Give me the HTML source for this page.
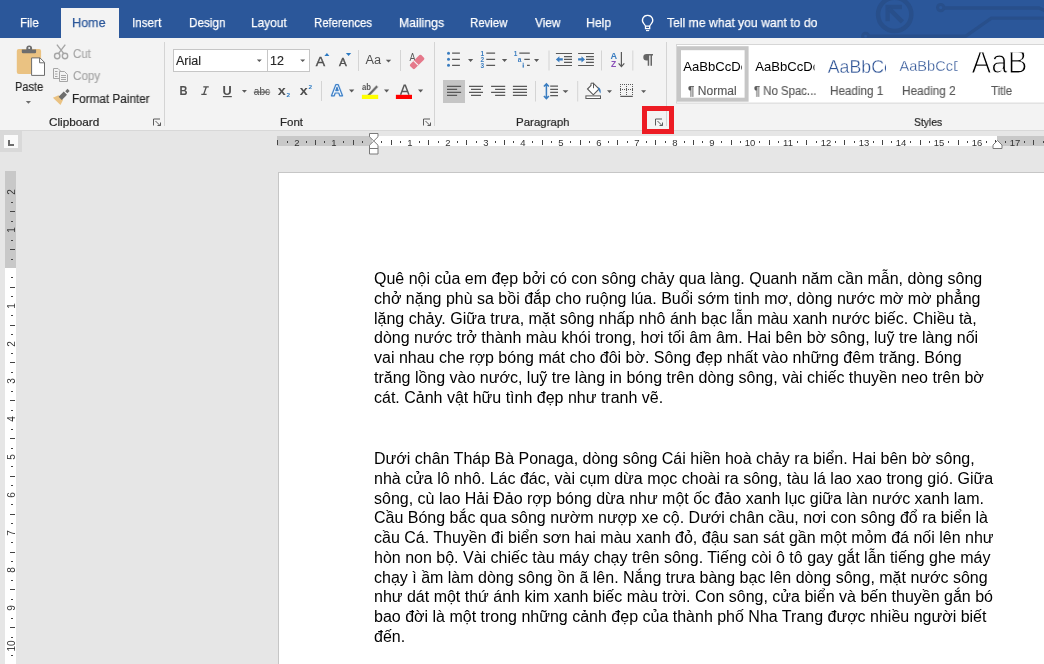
<!DOCTYPE html>
<html><head><meta charset="utf-8">
<style>
*{margin:0;padding:0;box-sizing:border-box}
html,body{width:1044px;height:664px;overflow:hidden;background:#e6e6e6;font-family:"Liberation Sans",sans-serif;position:relative}
div{position:absolute}
svg{position:absolute;overflow:visible;will-change:transform}
.tab,.t12,.gl,.rn,.vn,.tl{will-change:transform}
#tabbar{left:0;top:0;width:1044px;height:38px;background:#2b579a}
.tab{top:13px;font-size:13px;color:#fff;line-height:16px;white-space:nowrap;-webkit-text-stroke:0.25px currentColor}
#hometab{left:61px;top:8px;width:58px;height:30px;background:#f3f3f3}
#ribbon{left:0;top:38px;width:1044px;height:92px;background:#f3f3f3}
#rbborder{left:0;top:130px;width:1044px;height:1px;background:#d8d8d8}
.gl{top:116px;font-size:11.5px;color:#262626;line-height:14px;white-space:nowrap;-webkit-text-stroke:0.2px currentColor}
.sep{width:1px;background:#d4d4d4}
.t12{font-size:12px;line-height:14px;color:#262626;white-space:nowrap;-webkit-text-stroke:0.15px currentColor}
.dis{color:#a6a6a6}
.dd{width:0;height:0;border-left:3px solid transparent;border-right:3px solid transparent;border-top:3px solid #6d6d6d}
/* rulers */
#hr-l{left:277px;top:136px;width:95px;height:10px;background:#c8c8c8}
#hr-w{left:372px;top:136px;width:625px;height:10px;background:#fff}
#hr-r{left:997px;top:136px;width:47px;height:10px;background:#c8c8c8}
.rn{top:137.5px;width:20px;text-align:center;font-size:9.5px;line-height:10px;color:#333}
.rd{top:141px;width:1px;height:2px;background:#444}
.rl{top:140px;width:1px;height:5px;background:#444}
#vr-g{left:5px;top:171px;width:11px;height:97px;background:#c8c8c8}
#vr-w{left:5px;top:268px;width:11px;height:396px;background:#fff}
.vn{left:1.5px;width:20px;height:20px;text-align:center;font-size:10px;line-height:20px;color:#333;transform:rotate(-90deg)}
.vd{left:11px;width:2px;height:1px;background:#444}
.vl{left:10px;width:5px;height:1px;background:#444}
#page{left:278px;top:172px;width:800px;height:600px;background:#fff;border-left:1px solid #c6c6c6;border-top:1px solid #c6c6c6}
.tl{left:373.6px;font-size:16px;line-height:19.8px;color:#000;white-space:nowrap}
.sty{top:6px;height:59px;background:#fff;overflow:hidden}
#f_file{left:19.50px!important;top:14.60px!important;transform:scaleX(0.8950);transform-origin:0 0}
#f_home{left:72.33px!important;top:14.60px!important;transform:scaleX(0.9676);transform-origin:0 0}
#f_insert{left:132.30px!important;top:14.60px!important;transform:scaleX(0.9000);transform-origin:0 0}
#f_design{left:188.70px!important;top:14.60px!important;transform:scaleX(0.9026);transform-origin:0 0}
#f_layout{left:251.49px!important;top:14.60px!important;transform:scaleX(0.9128);transform-origin:0 0}
#f_refs{left:314.43px!important;top:14.60px!important;transform:scaleX(0.8723);transform-origin:0 0}
#f_mail{left:398.66px!important;top:14.60px!important;transform:scaleX(0.9447);transform-origin:0 0}
#f_review{left:470.12px!important;top:14.60px!important;transform:scaleX(0.8762);transform-origin:0 0}
#f_view{left:534.50px!important;top:14.60px!important;transform:scaleX(0.9107);transform-origin:0 0}
#f_help{left:586.26px!important;top:14.60px!important;transform:scaleX(0.9423);transform-origin:0 0}
#f_tell{left:667.40px!important;top:14.60px!important;transform:scaleX(0.9375);transform-origin:0 0}
#f_paste{left:14.92px!important;top:80.10px!important;transform:scaleX(0.8839);transform-origin:0 0}
#f_cut{left:72.50px!important;top:47.00px!important;transform:scaleX(0.9579);transform-origin:0 0}
#f_copy{left:72.50px!important;top:69.40px!important;transform:scaleX(0.9714);transform-origin:0 0}
#f_fp{left:71.52px!important;top:92.20px!important;transform:scaleX(0.9785);transform-origin:0 0}
#f_clip{left:48.50px!important;top:114.80px!important;transform:scaleX(1.0204);transform-origin:0 0}
#f_font{left:279.60px!important;top:114.80px!important;transform:scaleX(0.9957);transform-origin:0 0}
#f_para{left:516.00px!important;top:114.80px!important;transform:scaleX(0.9962);transform-origin:0 0}
#f_styles{left:914.40px!important;top:114.80px!important;transform:scaleX(0.9000);transform-origin:0 0}
#f_sn{left:688.20px!important;top:84.20px!important;transform:scaleX(1.0042);transform-origin:0 0}
#f_sns{left:754.00px!important;top:84.20px!important;transform:scaleX(0.9477);transform-origin:0 0}
#f_sh1{left:829.73px!important;top:84.20px!important;transform:scaleX(0.9741);transform-origin:0 0}
#f_sh2{left:901.62px!important;top:84.20px!important;transform:scaleX(0.9815);transform-origin:0 0}
#f_st{left:990.60px!important;top:84.20px!important;transform:scaleX(0.9545);transform-origin:0 0}

</style></head><body>
<div id="tabbar">
<svg width="1044" height="38" style="left:0;top:0">
 <g fill="none" stroke="#284f8b" stroke-width="3.4">
  <circle cx="894.7" cy="14.4" r="16.6" stroke-width="4.5"/>
  <circle cx="940.7" cy="7.6" r="3.2" stroke-width="3"/>
  <polyline points="944,8 1039,8 1050,13"/>
  <circle cx="865.6" cy="36.3" r="3" stroke-width="3"/>
  <polyline points="868.6,36.3 965.5,36.3 991.4,18.1 1050,18.1"/>
  <polyline points="902,7 887.6,7 887.6,21.2" stroke-width="4.3" stroke-linejoin="miter"/>
  <line x1="888.5" y1="8" x2="902.4" y2="21.8" stroke-width="4.5"/>
 </g>
</svg>
</div>
<div id="hometab"></div>
<div class="tab" id="f_file" style="left:20px">File</div>
<div class="tab" id="f_home" style="left:73px;color:#2b579a">Home</div>
<div class="tab" id="f_insert" style="left:133px">Insert</div>
<div class="tab" id="f_design" style="left:189px">Design</div>
<div class="tab" id="f_layout" style="left:252px">Layout</div>
<div class="tab" id="f_refs" style="left:315px">References</div>
<div class="tab" id="f_mail" style="left:399px">Mailings</div>
<div class="tab" id="f_review" style="left:471px">Review</div>
<div class="tab" id="f_view" style="left:535px">View</div>
<div class="tab" id="f_help" style="left:587px">Help</div>
<svg width="20" height="22" style="left:637px;top:10px">
 <path d="M10.6 5.3a5 5 0 0 0-3.6 8.6c.9 1 1.5 1.9 1.5 2.5v2.3h4.2v-2.3c0-.6.6-1.5 1.5-2.5a5 5 0 0 0-3.6-8.6z M8.5 16.2h4.2" fill="none" stroke="#fff" stroke-width="1.3"/>
 <path d="M9 20.6h3.2" stroke="#fff" stroke-width="1.1"/>
</svg>
<div class="tab" id="f_tell" style="left:667px">Tell me what you want to do</div>

<div id="ribbon"></div>
<svg width="1044" height="131" style="left:0;top:0">
 <!-- ===== Clipboard ===== -->
 <rect x="16.8" y="49" width="24.3" height="24.9" rx="2" fill="#eac282"/>
 <path d="M26.3 49.5v-1.2a2.9 2.9 0 0 1 5.8 0v1.2h4v2.5a1.2 1.2 0 0 1-1.2 1.2H23a1.2 1.2 0 0 1-1.2-1.2v-2.5z" fill="#6d6d6d"/>
 <circle cx="29.2" cy="48.1" r="1" fill="#f3f3f3"/>
 <path d="M31.6 57.9h8.4l4.5 4.5v13H31.6z" fill="#fff" stroke="#6d6d6d" stroke-width="1"/>
 <path d="M39.6 58v4.8h4.8" fill="none" stroke="#6d6d6d" stroke-width="1"/>
 <path d="M25.8 101h5.2l-2.6 2.8z" fill="#6d6d6d"/>
 <!-- scissors -->
 <g fill="none" stroke="#a6a6a6" stroke-width="1.4">
  <circle cx="57.2" cy="56" r="2.7"/><circle cx="65" cy="56" r="2.7"/>
  <path d="M58.4 53.6L65.3 44.6M63.8 53.6L56.9 44.6"/>
 </g>
 <!-- copy -->
 <g fill="#f3f3f3" stroke="#a6a6a6" stroke-width="1">
  <path d="M53.5 68.5h4.5l2.5 2.5v7.5h-7z"/>
  <path d="M59.5 71.5h5l3 3v7h-8z"/>
 </g>
 <g stroke="#a6a6a6" stroke-width="1">
  <path d="M55 71.5h2.5M55 74h2.5M55 76.5h2.5M61 75.5h5M61 77.5h5M61 79.5h5"/>
 </g>
 <!-- format painter -->
 <path d="M52.9 97.8l5.6-2.6 4.6 4.6-2.6 5.3z" fill="#eac282"/>
 <line x1="60.2" y1="98.3" x2="65.4" y2="93.1" stroke="#6d6d6d" stroke-width="4.6"/>
 <line x1="66.3" y1="92.2" x2="68.6" y2="89.9" stroke="#6d6d6d" stroke-width="3"/>
 <!-- launcher -->
 <g fill="none" stroke="#5a5a5a" stroke-width="1">
  <path d="M153.5 125.5v-6.5h6.5"/><path d="M155.5 121l5 5M157.5 125.5h3v-3"/>
 </g>
 <rect x="164" y="42" width="1" height="84" fill="#d4d4d4"/>

 <!-- ===== Font ===== -->
 <rect x="173.5" y="49.5" width="94" height="22" fill="#fff" stroke="#c6c6c6"/>
 <rect x="267.5" y="49.5" width="42" height="22" fill="#fff" stroke="#c6c6c6"/>
 <path d="M256.8 59.4h5l-2.5 2.6z M300.2 59.4h5l-2.5 2.6z" fill="#5a5a5a"/>
 <text x="315.8" y="65.5" font-size="13" fill="#505050" stroke="#505050" stroke-width="0.35" font-family="Liberation Sans" textLength="9.4" lengthAdjust="spacingAndGlyphs">A</text>
 <path d="M324.4 56h5l-2.5-2.9z" fill="#2b79c2"/>
 <text x="338.9" y="65.7" font-size="10.5" fill="#505050" stroke="#505050" stroke-width="0.35" font-family="Liberation Sans" textLength="7.8" lengthAdjust="spacingAndGlyphs">A</text>
 <path d="M345.9 53.1h5.3l-2.65 2.8z" fill="#2b79c2"/>
 <rect x="358" y="50" width="1" height="21" fill="#d4d4d4"/>
 <text x="365.6" y="64.1" font-size="12.5" fill="#505050" font-family="Liberation Sans" textLength="15.6" lengthAdjust="spacingAndGlyphs">Aa</text>
 <path d="M385.8 59.8h5.4l-2.7 2.6z" fill="#5a5a5a"/>
 <rect x="400" y="50" width="1" height="21" fill="#d4d4d4"/>
 <text x="409.5" y="60.8" font-size="10" fill="#5a5a5a" font-family="Liberation Sans" textLength="6" lengthAdjust="spacingAndGlyphs">A</text>
 <rect x="-3.2" y="-4.3" width="6.4" height="15.6" rx="1.3" transform="translate(419.6 59.5) rotate(45)" fill="#e5788a"/>
 <path d="M413.7 60.8l4.4 4.4" stroke="#f3f3f3" stroke-width="1.2"/>
 <!-- row 2 -->
 <text x="179.6" y="95" font-size="12" font-weight="bold" fill="#505050" font-family="Liberation Sans" textLength="8" lengthAdjust="spacingAndGlyphs">B</text>
 <path d="M203.3 86.3h5.5v1.2h-2l-2.2 6.3h2v1.2h-5.3v-1.2h1.9l2.2-6.3h-2.1z" fill="#505050"/>
 <text x="222.6" y="95" font-size="12" font-weight="bold" fill="#505050" font-family="Liberation Sans" textLength="9.2" lengthAdjust="spacingAndGlyphs">U</text>
 <rect x="222.9" y="96" width="8.9" height="1.2" fill="#505050"/>
 <path d="M241.9 90h5l-2.5 2.8z" fill="#5a5a5a"/>
 <text x="253.8" y="95.3" font-size="10" fill="#505050" font-family="Liberation Sans" textLength="16.2" lengthAdjust="spacingAndGlyphs">abc</text>
 <rect x="253.8" y="91.6" width="16.4" height="1" fill="#505050"/>
 <text x="277.7" y="95" font-size="12" font-weight="bold" fill="#505050" font-family="Liberation Sans" textLength="8" lengthAdjust="spacingAndGlyphs">x</text>
 <text x="286.4" y="96.9" font-size="6.2" font-weight="bold" fill="#2b79c2" font-family="Liberation Sans" textLength="3.6" lengthAdjust="spacingAndGlyphs">2</text>
 <text x="299.7" y="95" font-size="12" font-weight="bold" fill="#505050" font-family="Liberation Sans" textLength="8" lengthAdjust="spacingAndGlyphs">x</text>
 <text x="308.4" y="89.3" font-size="6.2" font-weight="bold" fill="#2b79c2" font-family="Liberation Sans" textLength="3.6" lengthAdjust="spacingAndGlyphs">2</text>
 <rect x="321" y="81" width="1" height="20" fill="#d4d4d4"/>
 <path d="M331.5 95.8l4.3-11.1h2.4l4.3 11.1h-2.7l-1-2.8h-3.6l-1 2.8z M335.8 90.6h2.4l-1.2-3.4z" fill="#f2f7fc" stroke="#dce8f6" stroke-width="2.6" stroke-linejoin="round"/>
 <path d="M331.5 95.8l4.3-11.1h2.4l4.3 11.1h-2.7l-1-2.8h-3.6l-1 2.8z M335.8 90.6h2.4l-1.2-3.4z" fill="#f2f7fc" stroke="#3f80c6" stroke-width="1.2" stroke-linejoin="round"/>
 <path d="M349 89.6h5.3l-2.65 3z" fill="#5a5a5a"/>
 <text x="362" y="90.2" font-size="8.6" font-weight="bold" fill="#555" font-family="Liberation Sans" textLength="9" lengthAdjust="spacingAndGlyphs">ab</text>
 <path d="M366.6 95.2l9.8-10.2 2.1 2-9.8 10.2z" fill="#6d6d6d" stroke="#f3f3f3" stroke-width="0.8"/>
 <rect x="361.9" y="94.8" width="16.3" height="4.2" fill="#ffff00"/>
 <path d="M384 89.6h5.2l-2.6 3z" fill="#5a5a5a"/>
 <path d="M400.6 94.8l3.6-9.5h1.1l3.6 9.5M401.9 91.6h5.7" fill="none" stroke="#595959" stroke-width="1.5"/>
 <rect x="395.9" y="94.8" width="16.1" height="4.2" fill="#ff0000"/>
 <path d="M418 89.6h5.2l-2.6 3z" fill="#5a5a5a"/>
 <g fill="none" stroke="#5a5a5a" stroke-width="1">
  <path d="M423.5 125.5v-6.5h6.5"/><path d="M425.5 121l5 5M427.5 125.5h3v-3"/>
 </g>
 <rect x="434" y="42" width="1" height="84" fill="#d4d4d4"/>

 <!-- ===== Paragraph ===== -->
 <g fill="#3a7dc0">
  <circle cx="448.5" cy="53.2" r="1.5"/><circle cx="448.5" cy="59.3" r="1.5"/><circle cx="448.5" cy="65.3" r="1.5"/>
 </g>
 <g stroke="#595959" stroke-width="1.2">
  <path d="M452.1 53.2h7.8M452.1 59.3h7.8M452.1 65.3h7.8"/>
  <path d="M486.3 53.2h8.8M486.3 59.3h8.8M486.3 65.3h8.8"/>
  <path d="M519.3 53.2h10.5M524.3 59.3h5.5M527 65.3h2.8"/>
 </g>
 <g fill="#3a7dc0" font-size="6.5" font-weight="bold" font-family="Liberation Sans">
  <text x="480.6" y="55.6">1</text><text x="480.6" y="61.7">2</text><text x="480.6" y="67.7">3</text>
  <text x="513.8" y="55.6">1</text><text x="517.8" y="61.7">a</text>
 </g>
 <rect x="522.6" y="64.3" width="1.3" height="3.3" fill="#3a7dc0"/><rect x="522.6" y="62.8" width="1.3" height="0.9" fill="#3a7dc0"/>
 <path d="M468h0" />
 <path d="M468 58.9h5.2l-2.6 3z M501.9 58.9h5.3l-2.65 3z M534 58.9h5.1l-2.55 3z" fill="#5a5a5a"/>
 <rect x="548.5" y="50.5" width="1" height="20" fill="#d4d4d4"/>
 <g stroke="#595959" stroke-width="1.2">
  <path d="M555.9 53.5h16.1M564 56.6h8M564 59.4h8M564 62.3h8M555.9 65.5h16.1"/>
  <path d="M578.1 53.5h15.8M586 56.6h7.9M586 59.4h7.9M586 62.3h7.9M578.1 65.5h15.8"/>
 </g>
 <g fill="#3a7dc0">
  <path d="M555.9 59.4l3.5-3.2v2.1h3.4v2.2h-3.4v2.1z"/>
  <path d="M585 59.4l-3.5-3.2v2.1h-3.4v2.2h3.4v2.1z"/>
 </g>
 <rect x="601" y="50.5" width="1" height="20" fill="#d4d4d4"/>
 <text x="610.5" y="58.7" font-size="8.5" font-weight="bold" fill="#3a7dc0" font-family="Liberation Sans" textLength="6.6" lengthAdjust="spacingAndGlyphs">A</text>
 <text x="610.9" y="67" font-size="8.5" font-weight="bold" fill="#8a50b8" font-family="Liberation Sans" textLength="5.2" lengthAdjust="spacingAndGlyphs">Z</text>
 <path d="M621.4 52v14.5M618.6 63.3l2.8 3.3 2.9-3.3" fill="none" stroke="#595959" stroke-width="1.2"/>
 <rect x="632.3" y="50.5" width="1" height="20" fill="#d4d4d4"/>
 <path d="M646.6 54h6.4v1.4h-1v10.4h-1.5V55.4h-1.3v10.4h-1.5v-5.2h-1.1a3.3 3.3 0 0 1 0-6.6z" fill="#666"/>
 <!-- row 2 -->
 <rect x="443" y="80" width="22" height="23" fill="#c5c5c5"/>
 <g stroke="#595959" stroke-width="1.2">
  <path d="M447 86.4h14.1M447 89.4h10.1M447 92.4h14.1M447 95.4h10.1"/>
  <path d="M469 86.4h14M471 89.4h10M469 92.4h14M471 95.4h10"/>
  <path d="M491.1 86.4h14.1M495.1 89.4h10.1M491.1 92.4h14.1M495.1 95.4h10.1"/>
  <path d="M512.9 86.4h14.1M512.9 89.4h14.1M512.9 92.4h14.1M512.9 95.4h14.1"/>
  <path d="M550.2 86.2h7.8M550.2 89.3h7.8M550.2 92.4h7.8M550.2 95.6h7.8"/>
 </g>
 <rect x="535" y="81" width="1" height="20.5" fill="#d4d4d4"/>
 <path d="M546.4 84v14.5M543.9 86.6l2.5-2.7 2.5 2.7M543.9 95.9l2.5 2.7 2.5-2.7" fill="none" stroke="#3a7dc0" stroke-width="1.5"/>
 <path d="M562.6 90.3h5.8l-2.9 2.6z" fill="#5a5a5a"/>
 <rect x="577.2" y="81" width="1" height="20.5" fill="#d4d4d4"/>
 <path d="M587.5 89l5.8-5.8 5.8 5.8-5.8 5.8z" fill="#fff" stroke="#595959" stroke-width="1.1"/>
 <path d="M591 86v-2.8h2.5v5" fill="#fff" stroke="#595959" stroke-width="1"/>
 <path d="M598 87.2c2.2.6 3.4 3.5 2.3 6.2l-1.6-3.2z" fill="#3a7dc0"/>
 <rect x="585.9" y="95.9" width="14.6" height="2.6" fill="#fff" stroke="#595959" stroke-width="1"/>
 <path d="M607 90.3h5l-2.5 2.6z" fill="#5a5a5a"/>
 <g fill="none" stroke="#595959" stroke-width="1" stroke-dasharray="1 1">
  <path d="M620 84.5h13M620 89.5h13M620.5 84v12M626.5 84v12M632.5 84v12"/>
 </g>
 <rect x="620.3" y="95.8" width="12.5" height="1.2" fill="#595959"/>
 <path d="M641.1 90.3h5l-2.5 2.6z" fill="#5a5a5a"/>
 <g fill="none" stroke="#5a5a5a" stroke-width="1">
  <path d="M655.5 125.5v-6.5h6.5"/><path d="M657.5 121l5 5M659.5 125.5h3v-3"/>
 </g>
 <rect x="666" y="42" width="1" height="84" fill="#d4d4d4"/>

 <!-- ===== Styles ===== -->
 <rect x="676.5" y="44.5" width="380" height="58.6" fill="#fff" stroke="#d6d6d6"/>
 <rect x="679" y="48.2" width="67.6" height="51.5" fill="#fff" stroke="#c6c6c6" stroke-width="4"/>
 <defs>
  <clipPath id="c1"><rect x="681" y="50" width="61" height="30"/></clipPath>
  <clipPath id="c2"><rect x="752" y="50" width="62.5" height="30"/></clipPath>
  <clipPath id="c3"><rect x="824" y="50" width="62" height="30"/></clipPath>
  <clipPath id="c4"><rect x="897" y="50" width="60.5" height="30"/></clipPath>
  <clipPath id="c5"><rect x="965" y="52.5" width="75" height="30"/></clipPath>
 </defs>
 <text clip-path="url(#c1)" x="683.3" y="71.1" font-size="13" fill="#000" font-family="Liberation Sans" textLength="64" lengthAdjust="spacingAndGlyphs">AaBbCcDc</text>
 <text clip-path="url(#c2)" x="755.2" y="71.1" font-size="13" fill="#000" font-family="Liberation Sans" textLength="64" lengthAdjust="spacingAndGlyphs">AaBbCcDc</text>
 <text clip-path="url(#c3)" x="827.8" y="72.8" font-size="18.5" fill="#2f5496" stroke="#fff" stroke-width="0.35" font-family="Liberation Sans" textLength="65" lengthAdjust="spacingAndGlyphs">AaBbCc</text>
 <text clip-path="url(#c4)" x="899.5" y="71.3" font-size="15" fill="#2f5496" stroke="#fff" stroke-width="0.3" font-family="Liberation Sans" textLength="64" lengthAdjust="spacingAndGlyphs">AaBbCcD</text>
 <text clip-path="url(#c5)" x="971.6" y="72.8" font-size="34" fill="#000" stroke="#fff" stroke-width="1.2" font-family="Liberation Sans" textLength="56" lengthAdjust="spacingAndGlyphs">AaB</text>
</svg>
<div class="t12" id="f_paste" style="left:15px;top:81px;font-size:12.5px">Paste</div>
<div class="t12 dis" id="f_cut" style="left:72px;top:46px">Cut</div>
<div class="t12 dis" id="f_copy" style="left:72px;top:69px">Copy</div>
<div class="t12" id="f_fp" style="left:72px;top:92px">Format Painter</div>
<div class="gl" id="f_clip" style="left:48px">Clipboard</div>
<div class="t12" style="left:176px;top:54px;font-size:12.5px">Arial</div>
<div class="t12" style="left:270px;top:54px;font-size:12.5px">12</div>
<div class="gl" id="f_font" style="left:280px">Font</div>
<div class="gl" id="f_para" style="left:516px">Paragraph</div>
<div class="t12" id="f_sn" style="left:688px;top:84px;color:#595959;font-size:12px">¶ Normal</div>
<div class="t12" id="f_sns" style="left:754px;top:84px;color:#595959;font-size:12px">¶ No Spac...</div>
<div class="t12" id="f_sh1" style="left:830px;top:84px;color:#595959;font-size:12px">Heading 1</div>
<div class="t12" id="f_sh2" style="left:902px;top:84px;color:#595959;font-size:12px">Heading 2</div>
<div class="t12" id="f_st" style="left:990px;top:84px;color:#595959;font-size:12px">Title</div>
<div class="gl" id="f_styles" style="left:914px">Styles</div>
<div id="rbborder"></div>

<!-- red highlight box -->
<div style="left:642px;top:106px;width:32px;height:28px;border:5px solid #ed1c24"></div>

<!-- tab selector -->
<div style="left:0;top:131px;width:22px;height:21px;background:#d9d9d9"></div>
<div style="left:4px;top:135px;width:14px;height:13px;background:#fafafa"></div>
<div style="left:8px;top:140px;width:2px;height:6px;background:#6d6d6d"></div>
<div style="left:8px;top:144px;width:6px;height:2px;background:#6d6d6d"></div>

<!-- horizontal ruler -->
<div id="hr-l"></div><div id="hr-w"></div><div id="hr-r"></div>
<div class="rn" style="left:286.6px">2</div>
<div class="rd" style="left:306px"></div>
<div class="rl" style="left:315px"></div>
<div class="rd" style="left:324px"></div>
<div class="rn" style="left:324.4px">1</div>
<div class="rd" style="left:343px"></div>
<div class="rl" style="left:353px"></div>
<div class="rd" style="left:362px"></div>
<div class="rd" style="left:381px"></div>
<div class="rl" style="left:391px"></div>
<div class="rd" style="left:400px"></div>
<div class="rn" style="left:400.0px">1</div>
<div class="rd" style="left:419px"></div>
<div class="rl" style="left:428px"></div>
<div class="rd" style="left:438px"></div>
<div class="rn" style="left:437.8px">2</div>
<div class="rd" style="left:457px"></div>
<div class="rl" style="left:466px"></div>
<div class="rd" style="left:476px"></div>
<div class="rn" style="left:475.6px">3</div>
<div class="rd" style="left:495px"></div>
<div class="rl" style="left:504px"></div>
<div class="rd" style="left:513px"></div>
<div class="rn" style="left:513.4px">4</div>
<div class="rd" style="left:532px"></div>
<div class="rl" style="left:542px"></div>
<div class="rd" style="left:551px"></div>
<div class="rn" style="left:551.2px">5</div>
<div class="rd" style="left:570px"></div>
<div class="rl" style="left:580px"></div>
<div class="rd" style="left:589px"></div>
<div class="rn" style="left:589.0px">6</div>
<div class="rd" style="left:608px"></div>
<div class="rl" style="left:617px"></div>
<div class="rd" style="left:627px"></div>
<div class="rn" style="left:626.8px">7</div>
<div class="rd" style="left:646px"></div>
<div class="rl" style="left:655px"></div>
<div class="rd" style="left:665px"></div>
<div class="rn" style="left:664.6px">8</div>
<div class="rd" style="left:684px"></div>
<div class="rl" style="left:693px"></div>
<div class="rd" style="left:702px"></div>
<div class="rn" style="left:702.4px">9</div>
<div class="rd" style="left:721px"></div>
<div class="rl" style="left:731px"></div>
<div class="rd" style="left:740px"></div>
<div class="rn" style="left:740.2px">10</div>
<div class="rd" style="left:759px"></div>
<div class="rl" style="left:769px"></div>
<div class="rd" style="left:778px"></div>
<div class="rn" style="left:778.0px">11</div>
<div class="rd" style="left:797px"></div>
<div class="rl" style="left:806px"></div>
<div class="rd" style="left:816px"></div>
<div class="rn" style="left:815.8px">12</div>
<div class="rd" style="left:835px"></div>
<div class="rl" style="left:844px"></div>
<div class="rd" style="left:854px"></div>
<div class="rn" style="left:853.6px">13</div>
<div class="rd" style="left:873px"></div>
<div class="rl" style="left:882px"></div>
<div class="rd" style="left:891px"></div>
<div class="rn" style="left:891.4px">14</div>
<div class="rd" style="left:910px"></div>
<div class="rl" style="left:920px"></div>
<div class="rd" style="left:929px"></div>
<div class="rn" style="left:929.2px">15</div>
<div class="rd" style="left:948px"></div>
<div class="rl" style="left:958px"></div>
<div class="rd" style="left:967px"></div>
<div class="rn" style="left:967.0px">16</div>
<div class="rd" style="left:986px"></div>
<div class="rl" style="left:995px"></div>
<div class="rd" style="left:1005px"></div>
<div class="rn" style="left:1004.8px">17</div>
<div class="rd" style="left:1024px"></div>
<div class="rl" style="left:1033px"></div>
<div class="rd" style="left:1043px"></div>
<div class="rd" style="left:287px"></div>
<div class="rl" style="left:277px"></div>
<svg width="12" height="24" style="left:368px;top:132px">
 <path d="M1.5 1.5h8.5v3.3L5.75 9 1.5 4.8z" fill="#fff" stroke="#7a7a7a" stroke-width="1"/>
 <path d="M5.75 9L10 13.2v8.8H1.5v-8.8z" fill="#fff" stroke="#7a7a7a" stroke-width="1"/>
 <path d="M1.5 16.5h8.5" stroke="#7a7a7a" stroke-width="1"/>
</svg>
<svg width="12" height="12" style="left:992px;top:139px">
 <path d="M5.5 1.5L10 6v3.5H1V6z" fill="#fff" stroke="#7a7a7a" stroke-width="1"/>
</svg>

<!-- vertical ruler -->
<div id="vr-g"></div><div id="vr-w"></div>
<div class="vn" style="top:182.4px">2</div>
<div class="vd" style="top:202px"></div>
<div class="vl" style="top:211px"></div>
<div class="vd" style="top:221px"></div>
<div class="vn" style="top:220.2px">1</div>
<div class="vd" style="top:240px"></div>
<div class="vl" style="top:249px"></div>
<div class="vd" style="top:259px"></div>
<div class="vd" style="top:277px"></div>
<div class="vl" style="top:287px"></div>
<div class="vd" style="top:296px"></div>
<div class="vn" style="top:295.8px">1</div>
<div class="vd" style="top:315px"></div>
<div class="vl" style="top:325px"></div>
<div class="vd" style="top:334px"></div>
<div class="vn" style="top:333.6px">2</div>
<div class="vd" style="top:353px"></div>
<div class="vl" style="top:362px"></div>
<div class="vd" style="top:372px"></div>
<div class="vn" style="top:371.4px">3</div>
<div class="vd" style="top:391px"></div>
<div class="vl" style="top:400px"></div>
<div class="vd" style="top:410px"></div>
<div class="vn" style="top:409.2px">4</div>
<div class="vd" style="top:429px"></div>
<div class="vl" style="top:438px"></div>
<div class="vd" style="top:448px"></div>
<div class="vn" style="top:447.0px">5</div>
<div class="vd" style="top:466px"></div>
<div class="vl" style="top:476px"></div>
<div class="vd" style="top:485px"></div>
<div class="vn" style="top:484.8px">6</div>
<div class="vd" style="top:504px"></div>
<div class="vl" style="top:514px"></div>
<div class="vd" style="top:523px"></div>
<div class="vn" style="top:522.6px">7</div>
<div class="vd" style="top:542px"></div>
<div class="vl" style="top:552px"></div>
<div class="vd" style="top:561px"></div>
<div class="vn" style="top:560.4px">8</div>
<div class="vd" style="top:580px"></div>
<div class="vl" style="top:589px"></div>
<div class="vd" style="top:599px"></div>
<div class="vn" style="top:598.2px">9</div>
<div class="vd" style="top:618px"></div>
<div class="vl" style="top:627px"></div>
<div class="vd" style="top:637px"></div>
<div class="vn" style="top:636.0px">10</div>
<div class="vd" style="top:655px"></div>

<div id="page"></div>
<div class="tl" style="top:269.00px">Quê nội của em đẹp bởi có con sông chảy qua làng. Quanh năm cần mẫn, dòng sông</div>
<div class="tl" style="top:288.80px">chở nặng phù sa bồi đắp cho ruộng lúa. Buổi sớm tinh mơ, dòng nước mờ mờ phẳng</div>
<div class="tl" style="top:308.60px">lặng chảy. Giữa trưa, mặt sông nhấp nhô ánh bạc lẫn màu xanh nước biếc. Chiều tà,</div>
<div class="tl" style="top:328.40px">dòng nước trở thành màu khói trong, hơi tối âm âm. Hai bên bờ sông, luỹ tre làng nối</div>
<div class="tl" style="top:348.20px">vai nhau che rợp bóng mát cho đôi bờ. Sông đẹp nhất vào những đêm trăng. Bóng</div>
<div class="tl" style="top:368.00px">trăng lồng vào nước, luỹ tre làng in bóng trên dòng sông, vài chiếc thuyền neo trên bờ</div>
<div class="tl" style="top:387.80px">cát. Cảnh vật hữu tình đẹp như tranh vẽ.</div>
<div class="tl" style="top:449.00px">Dưới chân Tháp Bà Ponaga, dòng sông Cái hiền hoà chảy ra biển. Hai bên bờ sông,</div>
<div class="tl" style="top:468.78px">nhà cửa lô nhô. Lác đác, vài cụm dừa mọc choài ra sông, tàu lá lao xao trong gió. Giữa</div>
<div class="tl" style="top:488.56px">sông, cù lao Hải Đảo rợp bóng dừa như một ốc đảo xanh lục giữa làn nước xanh lam.</div>
<div class="tl" style="top:508.34px">Cầu Bóng bắc qua sông nườm nượp xe cộ. Dưới chân cầu, nơi con sông đổ ra biển là</div>
<div class="tl" style="top:528.12px">cầu Cá. Thuyền đi biển sơn hai màu xanh đỏ, đậu san sát gần một mỏm đá nối lên như</div>
<div class="tl" style="top:547.90px">hòn non bộ. Vài chiếc tàu máy chạy trên sông. Tiếng còi ô tô gay gắt lẫn tiếng ghe máy</div>
<div class="tl" style="top:567.68px">chạy ì ầm làm dòng sông ồn ã lên. Nắng trưa bàng bạc lên dòng sông, mặt nước sông</div>
<div class="tl" style="top:587.46px">như dát một thứ ánh kim xanh biếc màu trời. Con sông, cửa biển và bến thuyền gắn bó</div>
<div class="tl" style="top:607.24px">bao đời là một trong những cảnh đẹp của thành phố Nha Trang được nhiều người biết</div>
<div class="tl" style="top:627.02px">đến.</div>
</body></html>
